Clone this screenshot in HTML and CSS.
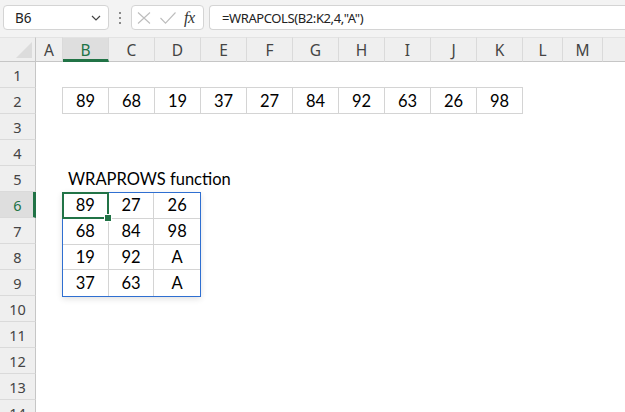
FILE: index.html
```html
<!DOCTYPE html>
<html>
<head>
<meta charset="utf-8">
<link rel="stylesheet" href="styles.css">
</head>
<body>
<div class="app">
  <div class="toolbar">
    <div class="namebox">
      <span class="nb-text">B6</span>
      <svg class="chev" width="10" height="6" viewBox="0 0 10 6"><path d="M1 1 L5 5 L9 1" fill="none" stroke="#444" stroke-width="1.2"/></svg>
    </div>
    <div class="dots"><i></i><i></i><i></i></div>
    <div class="fxbox">
      <svg class="ico" width="14" height="12" viewBox="0 0 14 12"><path d="M1 0.5 L13 11.5 M13 0.5 L1 11.5" stroke="#bdbdbd" stroke-width="1.1" fill="none"/></svg>
      <svg class="ico" width="16" height="12" viewBox="0 0 16 12"><path d="M0.5 6 L5.5 11.2 L15.5 0.5" stroke="#bdbdbd" stroke-width="1.1" fill="none"/></svg>
      <span class="fx">fx</span>
    </div>
    <div class="formula">=WRAPCOLS(B2:K2,4,"A")</div>
  </div>
  <div class="sheet">
    <div class="corner"><div class="tri"></div></div>
    <div class="ch">A</div>
    <div class="ch sel">B</div>
    <div class="ch">C</div>
    <div class="ch">D</div>
    <div class="ch">E</div>
    <div class="ch">F</div>
    <div class="ch">G</div>
    <div class="ch">H</div>
    <div class="ch">I</div>
    <div class="ch">J</div>
    <div class="ch">K</div>
    <div class="ch">L</div>
    <div class="ch">M</div>
    <div class="ch rest"></div>

    <div class="rh r1">1</div>
    <div class="rh r2">2</div>
    <div class="rh r3">3</div>
    <div class="rh r4">4</div>
    <div class="rh r5">5</div>
    <div class="rh r6 sel">6</div>
    <div class="rh r7">7</div>
    <div class="rh r8">8</div>
    <div class="rh r9">9</div>
    <div class="rh r10">10</div>
    <div class="rh r11">11</div>
    <div class="rh r12">12</div>
    <div class="rh r13">13</div>
    <div class="rh r14">14</div>

    <div class="row2">
      <div class="c">89</div><div class="c">68</div><div class="c">19</div><div class="c">37</div><div class="c">27</div>
      <div class="c">84</div><div class="c">92</div><div class="c">63</div><div class="c">26</div><div class="c">98</div>
    </div>

    <div class="title">WRAPROWS function</div>

    <div class="spill">
      <div class="c active">89<span class="handle"></span></div><div class="c">27</div><div class="c">26</div>
      <div class="c">68</div><div class="c">84</div><div class="c">98</div>
      <div class="c">19</div><div class="c">92</div><div class="c">A</div>
      <div class="c">37</div><div class="c">63</div><div class="c">A</div>
    </div>
  </div>
</div>
</body>
</html>
```

FILE: styles.css
```css
* { box-sizing: border-box; }
html, body { margin: 0; padding: 0; }
body { width: 625px; height: 412px; overflow: hidden; background: #fff; }
.app { width: 625px; height: 412px; display: flex; flex-direction: column; }

.toolbar {
  height: 37px;
  flex: none;
  background: #f3f3f3;
  display: flex;
  align-items: flex-start;
  padding: 5px 0 0 3px;
  font-family: "Noto Sans", "Open Sans", sans-serif;
  color: #222;
}
.namebox {
  width: 106px; height: 25px;
  background: #fff;
  border: 1px solid #d4d4d4;
  border-radius: 4px;
  display: flex; align-items: center; justify-content: space-between;
  padding: 0 7px 0 11px;
  font-size: 13.5px;
}
.chev { margin-top: 1px; }
.dots {
  width: 22px; height: 25px;
  display: flex; flex-direction: column; align-items: center; justify-content: center; gap: 3px;
}
.dots i { display: block; width: 2px; height: 2px; background: #8a8a8a; }
.fxbox {
  width: 73px; height: 25px;
  background: #fff;
  border: 1px solid #d4d4d4;
  border-radius: 4px;
  display: flex; align-items: center;
  padding: 0 0 0 5px;
  gap: 9px;
}
.fx {
  font-family: "Liberation Serif", "DejaVu Serif", serif;
  font-style: italic;
  font-size: 16px;
  color: #333;
  margin-left: -1px;
  letter-spacing: -0.5px;
}
.formula {
  flex: 1;
  height: 25px;
  margin-left: 5px;
  background: #fff;
  border: 1px solid #d4d4d4;
  border-right: none;
  border-radius: 4px 0 0 4px;
  padding: 0 0 0 12px;
  display: flex; align-items: center;
  font-size: 13px;
  letter-spacing: -0.4px;
  color: #222;
}

.sheet {
  flex: 1;
  display: grid;
  grid-template-columns: 36px 27px repeat(10, 46px) 40px 40px 1fr;
  grid-template-rows: 25px repeat(14, 26px);
  font-family: "Noto Sans", "Open Sans", sans-serif;
  overflow: hidden;
}
.corner {
  grid-column: 1; grid-row: 1;
  background: #efefef;
  border-right: 1px solid #c6c6c6;
  border-bottom: 1px solid #c6c6c6;
  border-top: 1px solid #e3e3e3;
  position: relative;
}
.tri {
  position: absolute; right: 3px; bottom: 3px;
  width: 0; height: 0;
  border-left: 16px solid transparent;
  border-bottom: 16px solid #dcdcdc;
}
.ch {
  grid-row: 1;
  background: #efefef;
  border-top: 1px solid #e3e3e3;
  border-right: 1px solid #dadada;
  border-bottom: 1px solid #c6c6c6;
  display: flex; align-items: center; justify-content: center;
  font-size: 15.5px;
  color: #444;
  padding-top: 1px;
}
.ch.rest { border-right: none; }
.ch.sel {
  background: #dedede;
  color: #217346;
  border-bottom: 3px solid #217346;
  padding-top: 3px;
}
.rh {
  grid-column: 1;
  background: #efefef;
  border-right: 1px solid #c6c6c6;
  border-bottom: 1px solid #dadada;
  display: flex; align-items: center; justify-content: center;
  font-size: 14.5px;
  color: #444;
}
.rh.sel {
  background: #dedede;
  color: #217346;
  border-right: 3px solid #217346;
  padding-left: 2px;
}
.r1 { grid-row: 2; } .r2 { grid-row: 3; } .r3 { grid-row: 4; } .r4 { grid-row: 5; }
.r5 { grid-row: 6; } .r6 { grid-row: 7; } .r7 { grid-row: 8; } .r8 { grid-row: 9; }
.r9 { grid-row: 10; } .r10 { grid-row: 11; } .r11 { grid-row: 12; } .r12 { grid-row: 13; }
.r13 { grid-row: 14; } .r14 { grid-row: 15; }

.c {
  display: flex; align-items: center; justify-content: center;
  font-family: "Lato", "Liberation Sans", sans-serif;
  font-size: 16.5px;
  color: #000;
}
.row2 {
  grid-column: 3 / 13;
  grid-row: 3;
  display: grid;
  grid-template-columns: repeat(10, 1fr);
  border-top: 1px solid #d4d4d4;
  border-left: 1px solid #d4d4d4;
  margin-left: -1px;
  margin-top: -1px;
}
.row2 .c {
  border-right: 1px solid #d4d4d4;
  border-bottom: 1px solid #d4d4d4;
}
.title {
  grid-column: 3 / 8;
  grid-row: 6;
  display: flex; align-items: center;
  padding-left: 5px;
  font-family: "Lato", "Liberation Sans", sans-serif;
  font-size: 16.5px;
  color: #000;
  white-space: nowrap;
}
.spill {
  grid-column: 3 / 6;
  grid-row: 7 / 11;
  display: grid;
  grid-template-columns: repeat(3, 1fr);
  grid-template-rows: repeat(4, 1fr);
  border: 1px solid #2f6fd1;
  margin: 0 0 -1px -1px;
  box-shadow: 0 2px 6px rgba(0,0,0,0.12);
  position: relative;
}
.spill .c {
  border-right: 1px solid #d4d4d4;
  border-bottom: 1px solid #d4d4d4;
}
.spill .c:nth-child(3n) { border-right: none; }
.spill .c:nth-child(n+10) { border-bottom: none; }
.spill .c.active {
  position: relative;
  border: 2px solid #217346;
  margin: -1px 0 0 -1px;
}
.handle {
  position: absolute;
  right: -4px; bottom: -4px;
  width: 6px; height: 6px;
  background: #217346;
  outline: 1px solid #fff;
}
```
